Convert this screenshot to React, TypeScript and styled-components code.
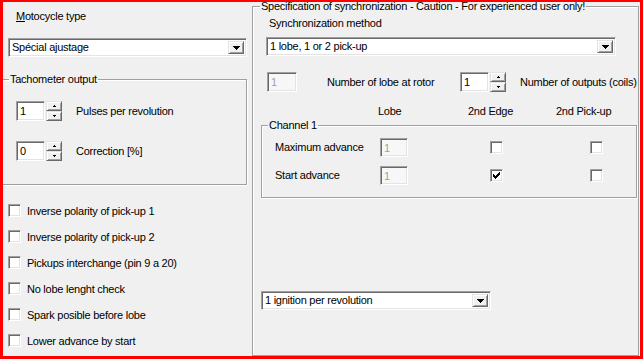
import styled, { createGlobalStyle, css } from "styled-components";

const GlobalStyle = createGlobalStyle`
  html, body {
    margin: 0;
    padding: 0;
    background: #fff;
  }
  body {
    font-family: "Liberation Sans", Arial, sans-serif;
    font-size: 11px;
    line-height: 13px;
    letter-spacing: -0.25px;
    color: #000;
  }
`;

const sunken = css`
  box-sizing: border-box;
  border: 1px solid;
  border-color: #a0a0a0 #fff #fff #a0a0a0;
  box-shadow: inset 1px 1px 0 #696969, inset -1px -1px 0 #e3e3e3;
`;

const raised = css`
  box-sizing: border-box;
  border: 1px solid;
  border-color: #e3e3e3 #696969 #696969 #e3e3e3;
  box-shadow: inset 1px 1px 0 #fff, inset -1px -1px 0 #a0a0a0;
  background: #f0f0f0;
`;

const Frame = styled.div`
  box-sizing: border-box;
  width: 643px;
  height: 359px;
  border: 3px solid #f00;
  border-top-width: 2px;
  background: #f0f0f0;
  display: grid;
  grid-template-columns: 249px 1fr;
  overflow: hidden;
`;

const LeftPane = styled.div`
  display: flex;
  flex-direction: column;
  align-items: flex-start;
`;

const RightPane = styled.div`
  display: flex;
  flex-direction: column;
`;

const Label = styled.div<{ $indent?: number; $top?: number }>`
  margin: ${(p) => p.$top ?? 0}px 0 0 ${(p) => p.$indent ?? 0}px;
  white-space: nowrap;
`;

const GroupBox = styled.fieldset<{ $width: number; $top: number; $left: number }>`
  box-sizing: border-box;
  width: ${(p) => p.$width}px;
  margin: ${(p) => p.$top}px 0 0 ${(p) => p.$left}px;
  padding: 0;
  min-width: 0;
  border: 1px solid #a0a0a0;
  box-shadow: 1px 1px 0 #fff, inset 1px 1px 0 #fff;
`;

const Legend = styled.legend<{ $offset: number }>`
  margin-left: ${(p) => p.$offset}px;
  padding: 0 1px;
  line-height: 13px;
  white-space: nowrap;
`;

const TachoBody = styled.div`
  display: flex;
  flex-direction: column;
  gap: 20px;
  padding: 15px 0 23px 13px;
`;

const SpinRow = styled.div`
  display: flex;
  align-items: center;
`;

const Edit = styled.div<{ $width: number; $height: number; $disabled?: boolean }>`
  ${sunken};
  width: ${(p) => p.$width}px;
  height: ${(p) => p.$height}px;
  background: ${(p) => (p.$disabled ? "#f7f7f7" : "#fff")};
  color: ${(p) => (p.$disabled ? "#a0a0a0" : "#000")};
  padding: 2px 0 0 3px;
  line-height: 14px;
  flex-shrink: 0;
`;

const SpinBox = styled.div`
  display: flex;
`;

const SpinButtons = styled.div`
  display: flex;
  flex-direction: column;
  width: 16px;
  height: 20px;
  margin-left: 1px;
`;

const SpinButton = styled.div`
  ${raised};
  flex: 1;
  display: flex;
  align-items: center;
  justify-content: center;
`;

const RowText = styled.span<{ $gap: number; $width?: number }>`
  margin-left: ${(p) => p.$gap}px;
  width: ${(p) => (p.$width ? `${p.$width}px` : "auto")};
  white-space: nowrap;
`;

const ComboBox = styled.div<{ $width: number; $top: number; $left: number }>`
  ${sunken};
  width: ${(p) => p.$width}px;
  height: 19px;
  margin: ${(p) => p.$top}px 0 0 ${(p) => p.$left}px;
  padding: 2px;
  background: #fff;
  display: flex;
  align-items: center;
`;

const ComboText = styled.span`
  flex: 1;
  padding-left: 1px;
  white-space: nowrap;
`;

const DropButton = styled.span`
  ${raised};
  width: 16px;
  align-self: stretch;
  display: flex;
  align-items: center;
  justify-content: center;
`;

const CheckList = styled.div`
  display: flex;
  flex-direction: column;
  gap: 13px;
  margin: 19px 0 0 5px;
`;

const CheckRow = styled.label`
  display: flex;
  align-items: center;
  gap: 6px;
  height: 13px;
  line-height: 12px;
  white-space: nowrap;
`;

const Box = styled.span`
  ${sunken};
  width: 13px;
  height: 13px;
  background: #fff;
  display: flex;
  align-items: center;
  justify-content: center;
  flex-shrink: 0;
`;

const SyncGroup = styled.fieldset`
  box-sizing: border-box;
  margin: -2px 1px 0 0;
  padding: 0;
  min-width: 0;
  height: calc(100% + 12px);
  border: 1px solid #a0a0a0;
  box-shadow: 1px 1px 0 #fff, inset 1px 1px 0 #fff;
  display: flex;
  flex-direction: column;
  align-items: flex-start;
`;

const CountRow = styled.div`
  display: flex;
  align-items: center;
  margin: 16px 0 0 14px;
`;

const HeaderRow = styled.div`
  display: grid;
  grid-template-columns: 90px 88px auto;
  margin: 13px 0 0 125px;
`;

const ChannelGrid = styled.div`
  display: grid;
  grid-template-columns: 105px 110px 100px 13px;
  row-gap: 9px;
  align-items: center;
  padding: 6px 0 12px 13px;
`;

const Arrow = ({ up, small }: { up?: boolean; small?: boolean }) =>
  small ? (
    <svg width="3" height="2" viewBox="0 0 3 2" style={{ display: "block" }}>
      {up ? <path d="M1 0h1v1h1v1H0V1h1z" fill="#000" /> : <path d="M0 0h3v1H2v1H1V1H0z" fill="#000" />}
    </svg>
  ) : (
    <svg width="7" height="4" viewBox="0 0 7 4" style={{ display: "block" }}>
      <path d="M0 0h7v1H0zM1 1h5v1H1zM2 2h3v1H2zM3 3h1v1H3z" fill="#000" />
    </svg>
  );

const Combo = ({ text, width, top, left }: { text: string; width: number; top: number; left: number }) => (
  <ComboBox $width={width} $top={top} $left={left}>
    <ComboText>{text}</ComboText>
    <DropButton>
      <Arrow />
    </DropButton>
  </ComboBox>
);

const Spinner = ({ value }: { value: string }) => (
  <SpinBox>
    <Edit $width={29} $height={20}>
      {value}
    </Edit>
    <SpinButtons>
      <SpinButton>
        <Arrow up small />
      </SpinButton>
      <SpinButton>
        <Arrow small />
      </SpinButton>
    </SpinButtons>
  </SpinBox>
);

const CheckBox = ({ checked }: { checked?: boolean }) => (
  <Box>
    {checked && (
      <svg width="7" height="7" viewBox="0 0 7 7" style={{ display: "block" }}>
        <path d="M0 2h1v1h1v1h1V3h1V2h1V1h1V0h1v3H6v1H5v1H4v1H3v1H2V6H1V5H0z" fill="#000" />
      </svg>
    )}
  </Box>
);

const options = [
  "Inverse polarity of pick-up 1",
  "Inverse polarity of pick-up 2",
  "Pickups interchange (pin 9 a 20)",
  "No lobe lenght check",
  "Spark posible before lobe",
  "Lower advance by start",
];

export default function App() {
  return (
    <>
      <GlobalStyle />
      <Frame>
        <LeftPane>
          <Label $indent={13} $top={8}>
            <u>M</u>otocycle type
          </Label>
          <Combo text="Spécial ajustage" width={239} top={15} left={5} />
          <GroupBox $width={245} $top={16} $left={-1}>
            <Legend $offset={6}>Tachometer output</Legend>
            <TachoBody>
              <SpinRow>
                <Spinner value="1" />
                <RowText $gap={14}>Pulses per revolution</RowText>
              </SpinRow>
              <SpinRow>
                <Spinner value="0" />
                <RowText $gap={14}>Correction [%]</RowText>
              </SpinRow>
            </TachoBody>
          </GroupBox>
          <CheckList>
            {options.map((o) => (
              <CheckRow key={o}>
                <CheckBox />
                {o}
              </CheckRow>
            ))}
          </CheckList>
        </LeftPane>
        <RightPane>
          <SyncGroup>
            <Legend $offset={7}>Specification of synchronization - Caution - For experienced user only!</Legend>
            <Label $indent={16} $top={4}>
              Synchronization method
            </Label>
            <Combo text="1 lobe, 1 or 2 pick-up" width={350} top={7} left={13} />
            <CountRow>
              <Edit $width={30} $height={20} $disabled>
                1
              </Edit>
              <RowText $gap={30} $width={133}>
                Number of lobe at rotor
              </RowText>
              <Spinner value="1" />
              <RowText $gap={14}>Number of outputs (coils)</RowText>
            </CountRow>
            <HeaderRow>
              <span>Lobe</span>
              <span>2nd Edge</span>
              <span>2nd Pick-up</span>
            </HeaderRow>
            <GroupBox $width={376} $top={1} $left={8}>
              <Legend $offset={6}>Channel 1</Legend>
              <ChannelGrid>
                <span>Maximum advance</span>
                <Edit $width={28} $height={19} $disabled>
                  1
                </Edit>
                <CheckBox />
                <CheckBox />
                <span>Start advance</span>
                <Edit $width={28} $height={19} $disabled>
                  1
                </Edit>
                <CheckBox checked />
                <CheckBox />
              </ChannelGrid>
            </GroupBox>
            <Combo text="1 ignition per revolution" width={230} top={93} left={8} />
          </SyncGroup>
        </RightPane>
      </Frame>
    </>
  );
}
